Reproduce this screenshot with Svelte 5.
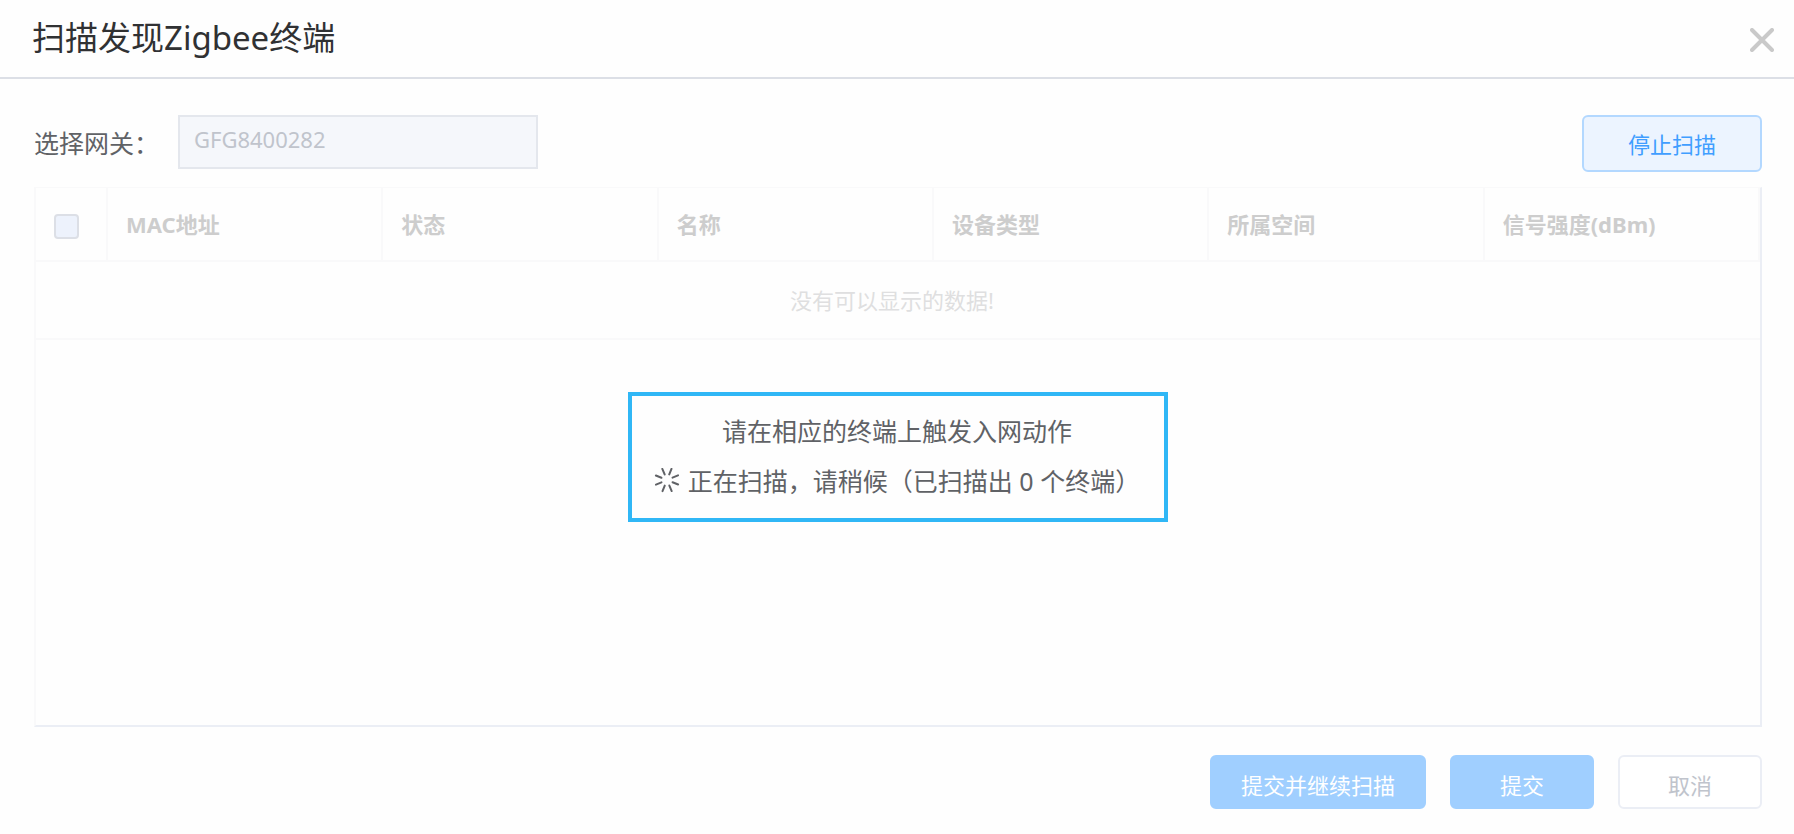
<script>
	let gateway = $state('GFG8400282');
	let scanned = $state(0);

	const columns = ['MAC地址', '状态', '名称', '设备类型', '所属空间', '信号强度(dBm)'];
	const spokes = [22, 67, 112, 157, 202, 247, 292, 337];
</script>

<section class="dialog">
	<header class="dialog-header">
		<h1>扫描发现Zigbee终端</h1>
		<button class="close" type="button" aria-label="关闭">
			<svg width="24" height="24" viewBox="0 0 24 24">
				<path d="M2 2L22 22M22 2L2 22" />
			</svg>
		</button>
	</header>

	<div class="dialog-body">
		<div class="toolbar">
			<label for="gateway">选择网关：</label>
			<input id="gateway" class="gateway" type="text" bind:value={gateway} disabled />
			<button class="btn stop" type="button">停止扫描</button>
		</div>

		<div class="table-wrap">
			<table>
				<thead>
					<tr>
						<th class="check">
							<input type="checkbox" aria-label="全选" disabled />
						</th>
						{#each columns as column}
							<th>{column}</th>
						{/each}
					</tr>
				</thead>
				<tbody>
					<tr>
						<td colspan={columns.length + 1}>没有可以显示的数据!</td>
					</tr>
				</tbody>
			</table>

			<div class="mask">
				<div class="tip">
					<p>请在相应的终端上触发入网动作</p>
					<p>
						<svg class="spinner" width="26" height="26" viewBox="-13 -12 26 26">
							{#each spokes as angle}
								<path d="M0 -6V-12" transform="rotate({angle})" />
							{/each}
						</svg>
						<span>正在扫描，请稍候（已扫描出 {scanned} 个终端）</span>
					</p>
				</div>
			</div>
		</div>

		<footer class="actions">
			<button class="btn primary wide" type="button" disabled>提交并继续扫描</button>
			<button class="btn primary" type="button" disabled>提交</button>
			<button class="btn plain" type="button" disabled>取消</button>
		</footer>
	</div>
</section>

<style>
	:global(body) {
		background: #fefefe;
	}

	.dialog,
	button,
	input {
		font-family: 'Noto Sans', 'Noto Sans CJK SC', sans-serif;
	}

	.dialog *,
	.dialog {
		box-sizing: border-box;
	}

	.dialog-header {
		display: flex;
		align-items: flex-start;
		justify-content: space-between;
		height: 79px;
		padding: 18px 20px 0 32px;
		border-bottom: 2px solid #dcdfe6;
	}

	h1 {
		margin: 0;
		font-size: 33px;
		font-weight: 400;
		line-height: 40px;
		color: #303133;
	}

	.close {
		display: flex;
		padding: 10px 0 0;
		border: none;
		background: none;
		cursor: pointer;
	}

	.close path {
		fill: none;
		stroke: #c9c9c9;
		stroke-width: 4;
		stroke-linecap: round;
	}

	.dialog-body {
		padding: 36px 32px 24px 34px;
	}

	.toolbar {
		display: flex;
		align-items: flex-start;
		margin-bottom: 15px;
	}

	label {
		width: 144px;
		font-size: 25px;
		line-height: 56px;
		color: #606266;
		white-space: nowrap;
	}

	.gateway {
		width: 360px;
		height: 54px;
		padding: 0 14px 6px;
		border: 2px solid #e4e7ed;
		background: #f5f7fb;
		font-size: 22px;
		color: #c0c4cc;
	}

	.btn {
		width: 144px;
		height: 54px;
		padding: 6px 0 0;
		border: 2px solid;
		border-radius: 6px;
		font-size: 22px;
		line-height: 32px;
	}

	.stop {
		width: 180px;
		height: 57px;
		margin-left: auto;
		padding-top: 0;
		border-color: #b3d8ff;
		background: #ecf4ff;
		color: #409eff;
		cursor: pointer;
	}

	.table-wrap {
		position: relative;
		min-height: 540px;
		border: 2px solid #ebeef5;
		border-top: 1px solid #f9f9fa;
		border-left-color: #f9f9fa;
	}

	table {
		width: 100%;
		table-layout: fixed;
		border-collapse: separate;
		border-spacing: 0;
		font-size: 22px;
		line-height: 32px;
	}

	th {
		height: 74px;
		padding: 0 18px;
		border-right: 2px solid #f9f9fa;
		border-bottom: 2px solid #f9f9fa;
		text-align: left;
		font-weight: 700;
		color: #cdcdcd;
		white-space: nowrap;
	}

	.check {
		width: 72px;
		padding-top: 4px;
		line-height: 0;
	}

	.check input {
		appearance: none;
		width: 25px;
		height: 25px;
		margin: 0;
		border: 2px solid #dcdfe6;
		border-radius: 4px;
		background: #edf2fc;
	}

	td {
		height: 78px;
		padding: 0 30px 0 18px;
		border-bottom: 2px solid #f9f9fa;
		text-align: center;
		color: #dfdfe0;
	}

	.mask {
		position: absolute;
		inset: 0;
		display: flex;
		align-items: center;
		justify-content: center;
	}

	.tip {
		width: 540px;
		padding: 10px 18px 12px 16px;
		border: 4px solid #30b7f6;
		background: #fefefe;
		font-size: 25px;
		line-height: 50px;
		color: #606266;
	}

	.tip p {
		display: flex;
		align-items: center;
		justify-content: center;
		gap: 8px;
		margin: 0;
		white-space: nowrap;
	}

	.spinner {
		flex: none;
	}

	.spinner path {
		fill: none;
		stroke: #606266;
		stroke-width: 2;
		stroke-linecap: round;
	}

	.actions {
		display: flex;
		justify-content: flex-end;
		gap: 24px;
		margin-top: 28px;
	}

	.primary {
		border-color: #a0cfff;
		background: #a0cfff;
		color: #fff;
	}

	.wide {
		width: 216px;
	}

	.plain {
		border-color: #ebeef5;
		background: #fff;
		color: #c0c4cc;
	}
</style>
